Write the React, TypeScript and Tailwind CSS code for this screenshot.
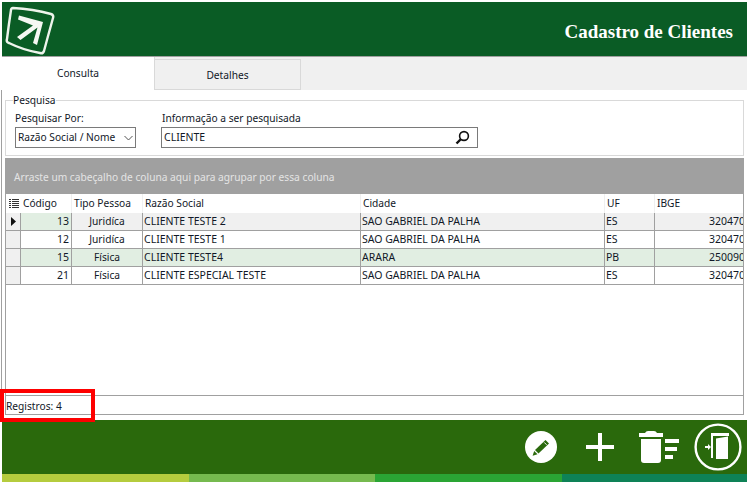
import React from "react";

const cols = [
  "w-[51px]",
  "w-[71px]",
  "w-[218px]",
  "w-[244px]",
  "w-[50px]",
  "w-[90px]",
];
const rows = [
  { c: "13", t: "Juridíca", r: "CLIENTE TESTE 2", ci: "SAO GABRIEL DA PALHA", u: "ES", i: "320470", bg: "bg-[#f0f0f0]", first: true, code: "bg-[#e1eee2]" },
  { c: "12", t: "Juridíca", r: "CLIENTE TESTE 1", ci: "SAO GABRIEL DA PALHA", u: "ES", i: "320470", bg: "bg-white", first: false, code: "bg-white" },
  { c: "15", t: "Física", r: "CLIENTE TESTE4", ci: "ARARA", u: "PB", i: "250090", bg: "bg-[#e1eee2]", first: false, code: "bg-[#e1eee2]" },
  { c: "21", t: "Física", r: "CLIENTE ESPECIAL TESTE", ci: "SAO GABRIEL DA PALHA", u: "ES", i: "320470", bg: "bg-white", first: false, code: "bg-white" },
];

function Logo() {
  return (
    <svg width="54" height="52" viewBox="0 0 54 52" className="mt-[1px]">
      <path d="M11 5 Q31 6 49 11 Q52 12 51 15 Q46 33 42 48 Q41 51 38 50 Q21 47 7 40 Q4 39 5 36 Q7 20 9 7 Q9 5 11 5 Z" fill="none" stroke="#eef4ec" strokeWidth="2.4" />
      <path d="M17 12.5 L41 19 L35 42 L31 40 L35.5 24.5 L18.5 37 L15 34 L31 22.5 L16 16.5 Z" fill="#f5f8f3" />
    </svg>
  );
}

function PencilIcon() {
  return (
    <svg width="32" height="32" viewBox="0 0 32 32">
      <circle cx="16" cy="16" r="16" fill="#fff" />
      <path d="M20.5 9 L24 12.5 L13.5 22.5 L10 19 Z" fill="#2a690c" />
      <path d="M9.2 20 L12.5 23.3 L7.6 24.7 Z" fill="#2a690c" />
      <path d="M19.2 11.4 L21.6 13.8" stroke="#fff" strokeWidth="1" />
    </svg>
  );
}

function PlusIcon() {
  return (
    <svg width="28" height="28" viewBox="0 0 28 28">
      <path d="M12 0 H16 V12 H28 V16 H16 V28 H12 V16 H0 V12 H12 Z" fill="#fff" />
    </svg>
  );
}

function TrashIcon() {
  return (
    <svg width="40" height="33" viewBox="0 0 40 33">
      <path d="M0 2 H6 Q7 0 9 0 H15 Q17 0 18 2 H24 V6 H0 Z" fill="#fff" />
      <path d="M2 8 H22 V29 Q22 32 19 32 H5 Q2 32 2 29 Z" fill="#fff" />
      <rect x="26" y="8" width="14" height="4" fill="#fff" />
      <rect x="26" y="16" width="12" height="4" fill="#fff" />
      <rect x="26" y="24" width="8" height="4" fill="#fff" />
    </svg>
  );
}

function ExitIcon() {
  return (
    <svg width="48" height="48" viewBox="0 0 48 48">
      <circle cx="24" cy="24" r="22.4" fill="none" stroke="#fff" strokeWidth="2.4" />
      <path d="M17 10 H35 V13 H19 V35 H17 Z" fill="#fff" />
      <path d="M22 15.5 L34 13.5 V36 H22 Z" fill="#fff" />
      <path d="M11 23 H14 V21 L17 24 L14 27 V25 H11 Z" fill="#fff" />
    </svg>
  );
}

export default function App() {
  return (
    <div className="w-[749px] h-[482px] overflow-hidden relative flex flex-col bg-white px-[2px] pt-[2px] text-[#111827] text-[10.2px]" style={{ fontFamily: '"Noto Sans", "Liberation Sans", sans-serif' }}>
      <header className="h-[54px] shrink-0 bg-[#0a5c25] flex items-start justify-between border-b border-[#a0a0a0] box-content">
        <Logo />
        <h1 className="mt-[20px] mr-[14px] text-white font-bold text-[19px] leading-[20px]" style={{ fontFamily: '"Liberation Serif", serif' }}>Cadastro de Clientes</h1>
      </header>

      <div className="h-[33px] shrink-0 flex bg-[#f0f0f0]">
        <div className="w-[153px] h-[33px] bg-white border-r border-[#d9d9d9] text-center pt-[9px] leading-[15px]">Consulta</div>
        <div className="w-[146px] h-[31px] mt-[2px] border-t border-r border-b border-[#d9d9d9] text-center pt-[8px] leading-[15px]">Detalhes</div>
      </div>

      <main className="flex-1 min-h-0 flex flex-col px-[3px] bg-white border-l border-[#a0a0a0] -ml-px">
        <fieldset className="h-[62px] shrink-0 border border-[#d9d9d9] mt-[4px] px-[9px] relative min-w-0">
          <legend className="px-0 ml-[-2px] leading-[13px]">Pesquisa</legend>
          <div className="flex gap-[25px] mt-[4px]">
            <div className="w-[121px]">
              <label className="block leading-[14px] mb-[2px]">Pesquisar Por:</label>
              <div className="h-[21px] border border-[#7a7a7a] flex items-center justify-between pl-[2px] pr-[2px] whitespace-nowrap">
                <span>Razão Social / Nome</span>
                <svg width="9" height="6" viewBox="0 0 9 6"><path d="M0.5 1 L4.5 5 L8.5 1" fill="none" stroke="#555" strokeWidth="1" /></svg>
              </div>
            </div>
            <div className="w-[317px]">
              <label className="block leading-[14px] mb-[2px] ml-[1px]">Informação a ser pesquisada</label>
              <div className="h-[21px] border border-[#7a7a7a] flex items-center justify-between pl-[2px] pr-[7px] text-[10.5px]">
                <span>CLIENTE</span>
                <svg width="15" height="15" viewBox="0 0 15 15"><circle cx="9" cy="6" r="4.4" fill="none" stroke="#111" strokeWidth="1.6" /><path d="M6 9 L1.5 13.5" stroke="#111" strokeWidth="2.4" /></svg>
              </div>
            </div>
          </div>
        </fieldset>

        <div className="mt-[2px] h-[36px] shrink-0 bg-[#a0a0a0] text-[#e4e4e4] flex items-center pl-[9px] pt-[3px]">Arraste um cabeçalho de coluna aqui para agrupar por essa coluna</div>

        <div className="h-[201px] shrink-0 border-l border-r border-[#a0a0a0] overflow-hidden">
          <div className="flex h-[19px] items-center">
            <div className="w-[15px] flex justify-center shrink-0">
              <svg width="10" height="9" viewBox="0 0 10 9"><path d="M0 0.5h2M3 0.5h7M0 2.5h2M3 2.5h7M0 4.5h2M3 4.5h7M0 6.5h2M3 6.5h7M0 8.5h2M3 8.5h7" stroke="#333" strokeWidth="1" /></svg>
            </div>
            {["Código", "Tipo Pessoa", "Razão Social", "Cidade", "UF", "IBGE"].map((h, i) => (
              <div key={h} className={`${cols[i]} shrink-0 h-full border-r border-[#f0f0f0] pl-[2px] leading-[19px]`}>{h}</div>
            ))}
          </div>
          {rows.map((r) => (
            <div key={r.c} className={`flex h-[18px] border-b border-[#a0a0a0] leading-[17px] text-[10.5px] ${r.bg}`}>
              <div className="w-[15px] shrink-0 bg-[#f0f0f0] border-r border-[#a0a0a0] flex items-center justify-center">
                {r.first && <svg width="5" height="9" viewBox="0 0 5 9"><path d="M0 0 L5 4.5 L0 9 Z" fill="#111" /></svg>}
              </div>
              <div className={`${cols[0]} shrink-0 border-r border-[#a0a0a0] text-right pr-[2px] ${r.code}`}>{r.c}</div>
              <div className={`${cols[1]} shrink-0 border-r border-[#a0a0a0] text-center text-[10.2px]`}>{r.t}</div>
              <div className={`${cols[2]} shrink-0 border-r border-[#a0a0a0] pl-[1px]`}>{r.r}</div>
              <div className={`${cols[3]} shrink-0 border-r border-[#a0a0a0] pl-[1px]`}>{r.ci}</div>
              <div className={`${cols[4]} shrink-0 border-r border-[#a0a0a0] pl-[1px]`}>{r.u}</div>
              <div className={`${cols[5]} shrink-0 text-right whitespace-nowrap overflow-hidden`}>{r.i}</div>
            </div>
          ))}
        </div>

        <div className="h-[20px] shrink-0 border border-[#a0a0a0] pl-0 leading-[21px]">Registros: 4</div>
        <div className="h-[4px] shrink-0" />
      </main>

      <footer className="h-[54px] shrink-0 bg-[#2a690c] flex items-center justify-end pr-[5px]">
        <div className="mr-[29px]"><PencilIcon /></div>
        <div className="mr-[25px]"><PlusIcon /></div>
        <div className="mr-[15px]"><TrashIcon /></div>
        <ExitIcon />
      </footer>
      <div className="h-[8px] shrink-0 flex">
        <div className="w-[187px] bg-[#b5cc3e]" />
        <div className="w-[186px] bg-[#76ba4f]" />
        <div className="w-[187px] bg-[#2aa534]" />
        <div className="flex-1 bg-[#0e8257]" />
      </div>

      <div className="absolute left-0 top-[389px] w-[95px] h-[33px] border-[4px] border-[#fe0000]" />
    </div>
  );
}
